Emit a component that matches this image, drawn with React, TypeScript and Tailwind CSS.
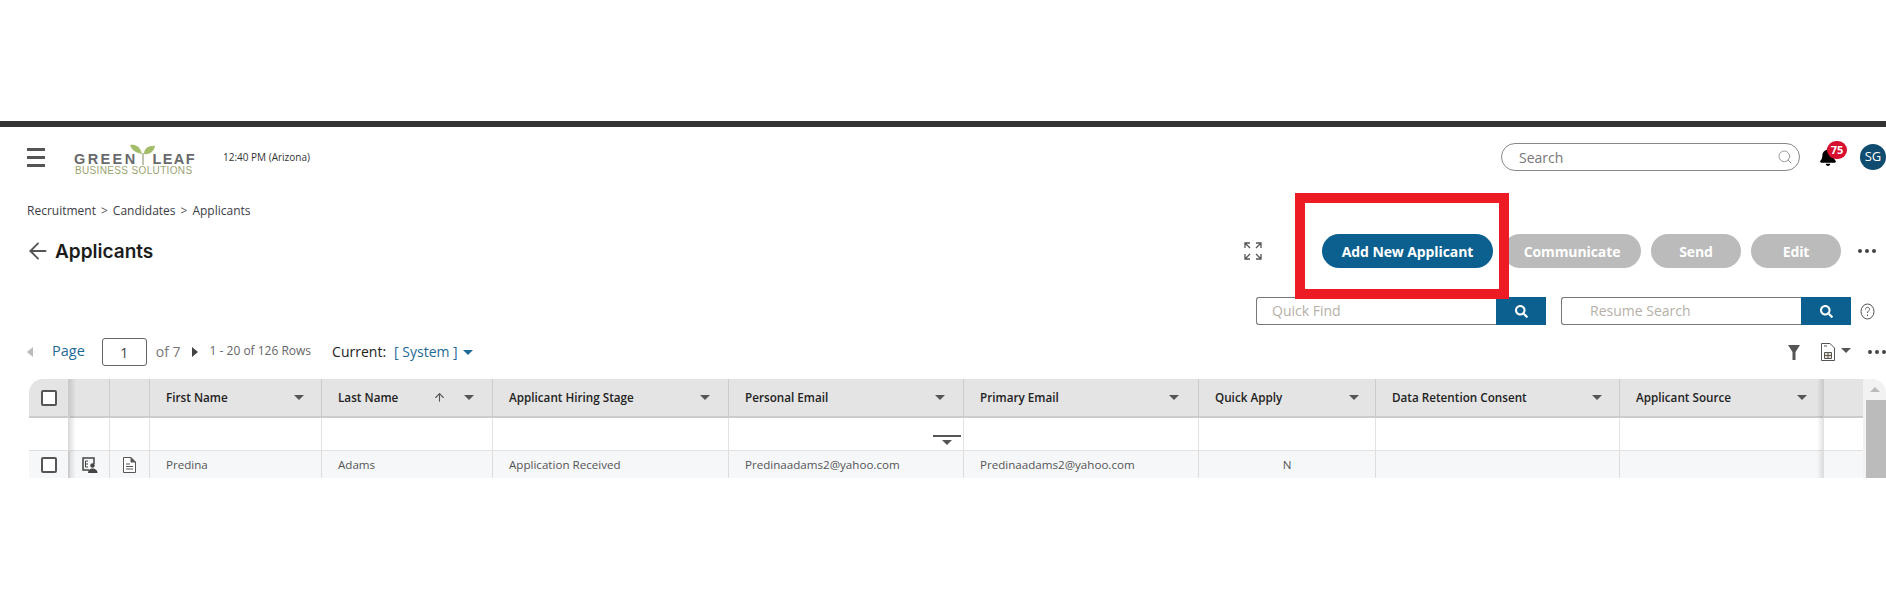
import { ArrowLeft, ArrowUp, Search } from "lucide-react";
import { FaBell, FaSearch } from "react-icons/fa";

const columns = [
  { label: "First Name", value: "Predina", caret: "w-[138px]" },
  { label: "Last Name", value: "Adams", caret: "w-[136px]", sorted: true },
  { label: "Applicant Hiring Stage", value: "Application Received", caret: "w-[201px]" },
  { label: "Personal Email", value: "Predinaadams2@yahoo.com", caret: "w-[200px]", filter: true },
  { label: "Primary Email", value: "Predinaadams2@yahoo.com", caret: "w-[199px]" },
  { label: "Quick Apply", value: "N", caret: "w-[144px]", center: true },
  { label: "Data Retention Consent", value: "", caret: "w-[210px]" },
  { label: "Applicant Source", value: "", caret: "w-[171px]" },
];

function Caret({ className = "border-t-[#555]" }: { className?: string }) {
  return <span className={`inline-block h-0 w-0 border-x-[5px] border-t-[5px] border-x-transparent ${className}`} />;
}

function Checkbox() {
  return <span className="block h-[16px] w-[16px] rounded-[2px] border-2 border-[#555] bg-white" />;
}

function Dots({ className = "" }: { className?: string }) {
  return (
    <div className={`flex gap-[3px] ${className}`}>
      <span className="h-[4px] w-[4px] rounded-full bg-[#444]" />
      <span className="h-[4px] w-[4px] rounded-full bg-[#444]" />
      <span className="h-[4px] w-[4px] rounded-full bg-[#444]" />
    </div>
  );
}

function Logo() {
  return (
    <div className="relative ml-[29px] h-[30px] w-[122px] shrink-0 font-['Liberation_Sans',sans-serif]">
      <svg className="absolute left-[56px] top-[2px]" width="26" height="21" viewBox="0 0 26 21">
        <path d="M12 10C7 9 2 7 0 1c5-1 10 1 12 9Z" fill="#a4bd6a" />
        <path d="M14 10c0-5 4-9 11-8-1 5-5 9-11 8Z" fill="#a4bd6a" />
        <path d="M13 9v12" stroke="#7f8a5c" strokeWidth="1" />
      </svg>
      <div className="absolute left-0 top-[12px] flex w-[122px] justify-between text-[14.5px] font-bold leading-[10px] text-[#67696b]">
        <span className="tracking-[2.4px]">GREEN</span>
        <span className="tracking-[1.4px]">LEAF</span>
      </div>
      <div className="absolute left-[1px] top-[25px] w-[121px] whitespace-nowrap text-[10px] leading-[8px] tracking-[0.35px] text-[#9ba36f]">
        BUSINESS SOLUTIONS
      </div>
    </div>
  );
}

function SearchBox({ placeholder, textClass, className }: { placeholder: string; textClass: string; className: string }) {
  return (
    <div className={`flex h-[28px] ${className}`}>
      <div className={`flex flex-1 items-center rounded-l-[3px] border border-r-0 border-[#777] pb-[2px] text-[14px] text-[#b5b0a8] ${textClass}`}>
        {placeholder}
      </div>
      <div className="flex w-[50px] items-center justify-center bg-[#0b6090] text-white">
        <FaSearch size={13} />
      </div>
    </div>
  );
}

function ActionButton({ label, className }: { label: string; className: string }) {
  return (
    <button className={`flex h-[34px] items-center justify-center rounded-full text-[14px] font-bold tracking-[-0.1px] text-white ${className}`}>
      {label}
    </button>
  );
}

export default function App() {
  return (
    <div className="relative h-[599px] w-[1886px] overflow-hidden bg-white pt-[121px] font-['Open_Sans',sans-serif] text-[#333]">
      <div className="h-[6px] bg-[#333]" />

      <header className="mt-[16px] flex h-[28px] items-center pl-[27px]">
        <div className="flex w-[18px] flex-col gap-[5px]">
          <span className="h-[3px] bg-[#555]" />
          <span className="h-[3px] bg-[#555]" />
          <span className="h-[3px] bg-[#555]" />
        </div>
        <Logo />
        <span className="ml-[27px] text-[10px] text-[#333]">12:40 PM (Arizona)</span>
        <div className="ml-auto flex h-[28px] w-[299px] items-center justify-between rounded-full border border-[#888] pl-[17px] pr-[6px] text-[14px] text-[#777]">
          Search
          <Search size={16} strokeWidth={1.5} className="text-[#999]" />
        </div>
        <div className="relative ml-[19px] flex w-[18px] items-center">
          <FaBell size={18} className="text-black" />
          <span className="absolute left-[8px] top-[-7px] flex h-[18px] w-[20px] items-center justify-center rounded-full bg-[#d8102f] text-[11px] font-bold text-white">
            75
          </span>
        </div>
        <div className="ml-[23px] flex h-[26px] w-[26px] shrink-0 items-center justify-center rounded-full bg-[#0f4c70] text-[13px] text-white">
          SG
        </div>
      </header>

      <nav className="mt-[32px] flex h-[16px] items-center gap-[5px] pl-[27px] text-[12px] text-[#3c3c46]">
        <span>Recruitment</span>
        <span className="text-[#555]">&gt;</span>
        <span>Candidates</span>
        <span className="text-[#555]">&gt;</span>
        <span>Applicants</span>
      </nav>

      <div className="mt-[15px] flex h-[34px] items-center pl-[25px] pr-[10px]">
        <ArrowLeft size={26} strokeWidth={1.7} className="text-[#555]" />
        <h1 className="ml-[4px] pt-[2px] font-['Inter',sans-serif] text-[19px] font-semibold text-[#1c1c1c]">Applicants</h1>
        <svg className="ml-auto" width="18" height="18" viewBox="0 0 18 18" fill="none" stroke="#555" strokeWidth="1.3">
          <path d="M1 6V1h5M1 1l5 5M17 6V1h-5M17 1l-5 5M1 12v5h5M1 17l5-5M17 12v5h-5M17 17l-5-5" />
        </svg>
        <ActionButton label="Add New Applicant" className="ml-[60px] w-[171px] bg-[#0b6090]" />
        <ActionButton label="Communicate" className="ml-[10px] w-[138px] bg-[#bbbbbb]" />
        <ActionButton label="Send" className="ml-[10px] w-[90px] bg-[#bbbbbb]" />
        <ActionButton label="Edit" className="ml-[10px] w-[90px] bg-[#bbbbbb]" />
        <Dots className="ml-[17px]" />
      </div>

      <div className="mt-[29px] flex h-[28px] items-center pl-[1256px]">
        <SearchBox placeholder="Quick Find" textClass="pl-[15px]" className="w-[290px]" />
        <SearchBox placeholder="Resume Search" textClass="pl-[28px]" className="ml-[15px] w-[290px]" />
        <svg className="ml-[9px]" width="15" height="17" viewBox="0 0 15 17" fill="none" stroke="#555">
          <ellipse cx="7.5" cy="8.5" rx="6.5" ry="7.5" />
          <path d="M5.5 6.5c0-3 4-3 4 0 0 1.500-2 1.500-2 3.500M7.500 11.500v1.500" />
        </svg>
      </div>

      <div className="mt-[13px] flex h-[28px] items-center pl-[27px] text-[14px]">
        <span className="h-0 w-0 border-y-[5px] border-r-[6px] border-y-transparent border-r-[#bbb]" />
        <span className="ml-[19px] pb-[2px] text-[14.5px] text-[#1f6a96]">Page</span>
        <div className="ml-[17px] flex h-[28px] w-[45px] items-center justify-center rounded-[3px] border border-[#666] text-[#444]">1</div>
        <span className="ml-[9px] pb-[2px] text-[#777]">of 7</span>
        <span className="ml-[11px] h-0 w-0 border-y-[5px] border-l-[6px] border-y-transparent border-l-[#444]" />
        <span className="ml-[12px] pb-[2px] text-[12px] text-[#666]">1 - 20 of 126 Rows</span>
        <span className="ml-[21px] pb-[2px] text-[#222]">Current:</span>
        <span className="ml-[8px] pb-[2px] text-[#1f6a96]">[ System ]</span>
        <Caret className="ml-[5px] border-t-[#1f6a96]" />
        <svg className="ml-auto" width="12" height="15" viewBox="0 0 12 15">
          <path d="M0 0h12L7.500 7v8h-3V7Z" fill="#555" />
        </svg>
        <svg className="ml-[21px]" width="14" height="18" viewBox="0 0 14 18" fill="white" stroke="#555">
          <path d="M.5.5H9L13.500 5v12.500H.5Z" />
          <path d="M3 3h3" />
          <path d="M3.500 9.500h7v6h-7Z" fill="#e8dfd0" />
          <path d="M7 9.500v6M3.500 12.500h7" />
        </svg>
        <Caret className="ml-[6px] mb-[3px] border-t-[#555]" />
        <Dots className="ml-[17px]" />
      </div>

      <div className="relative mt-[13px] ml-[29px] flex h-[99px] overflow-hidden rounded-t-[14px]">
        <div className="grid w-[1834px] grid-cols-[41px_40px_40px_172px_171px_236px_235px_235px_177px_244px_204px_39px] grid-rows-[39px_33px_27px] text-[11.7px]">
          <div className="flex items-center justify-center border-r-2 border-b-2 border-[#ccc] bg-[#e4e4e4]"><Checkbox /></div>
          <div className="border-r border-b-2 border-[#ccc] bg-[#e4e4e4]" />
          <div className="border-r border-b-2 border-[#ccc] bg-[#e4e4e4]" />
          {columns.map((c) => (
            <div key={c.label} className="flex items-center border-r border-b-2 border-[#ccc] bg-[#e4e4e4] pl-[16px] font-semibold text-[#222]">
              <div className={`relative flex shrink-0 items-center justify-between ${c.caret}`}>
                <span className="whitespace-nowrap pt-[1px]">{c.label}</span>
                {c.sorted && <ArrowUp size={13} className="absolute left-[95px] text-[#555]" />}
                <Caret />
              </div>
            </div>
          ))}
          <div className="border-b-2 border-[#ccc] bg-[#e4e4e4]" />

          <div className="border-r-2 border-b border-[#ddd]" />
          <div className="border-r border-b border-[#e2e2e2]" />
          <div className="border-r border-b border-[#e2e2e2]" />
          {columns.map((c) => (
            <div key={c.label} className="relative border-r border-b border-[#e2e2e2]">
              {c.filter && (
                <div className="absolute bottom-[5px] right-[2px] flex w-[28px] flex-col items-center gap-[3px]">
                  <span className="h-[2px] w-[28px] bg-[#555]" />
                  <Caret />
                </div>
              )}
            </div>
          ))}
          <div className="border-b border-[#e2e2e2]" />

          <div className="flex items-center justify-center border-r-2 border-[#ccc] bg-[#f6f7f9]"><Checkbox /></div>
          <div className="flex items-center justify-center border-r border-[#ddd] bg-[#f6f7f9]">
            <svg width="16" height="16" viewBox="0 0 16 16" fill="none" stroke="#444" strokeWidth="1.500">
              <path d="M7 13H1V1h11v6" />
              <path d="M6 4H3.500v6H6M3.500 7H6" strokeWidth="1" />
              <circle cx="10.500" cy="8.500" r="2.200" fill="#444" stroke="none" />
              <path d="M6 16c0-3 2-4.500 4.500-4.500S15.500 13 15.500 16Z" fill="#444" stroke="none" />
            </svg>
          </div>
          <div className="flex items-center justify-center border-r border-[#ddd] bg-[#f6f7f9]">
            <svg width="13" height="16" viewBox="0 0 13 16" fill="white" stroke="#555">
              <path d="M.5.5H8L12.500 5v10.500H.5Z" />
              <path d="M8 .5V5h4.500" fill="#555" />
              <path d="M3 7h4M3 9.500h7M3 12h7" />
            </svg>
          </div>
          {columns.map((c) => (
            <div
              key={c.label}
              className={`flex items-center border-r border-[#ddd] bg-[#f6f7f9] pt-[1px] text-[11.6px] text-[#555] ${c.center ? "justify-center" : "pl-[16px]"}`}
            >
              {c.value}
            </div>
          ))}
          <div className="bg-[#f6f7f9]" />
        </div>
        <div className="flex w-[23px] flex-col items-end bg-[#f2f2f2]">
          <div className="flex h-[21px] w-[23px] items-center justify-center">
            <span className="h-0 w-0 border-x-[5px] border-b-[5px] border-x-transparent border-b-[#bbb]" />
          </div>
          <div className="w-[20px] flex-1 bg-[#bbbbbb]" />
        </div>
        <div className="absolute inset-y-0 left-[41px] w-[6px] bg-gradient-to-r from-[#0000001a] to-transparent" />
        <div className="absolute inset-y-0 left-[1788px] w-[6px] bg-gradient-to-l from-[#0000001a] to-transparent" />
      </div>

      <div className="absolute left-[1295px] top-[193px] h-[106px] w-[214px] border-[10px] border-[#ed1c24]" />
    </div>
  );
}
